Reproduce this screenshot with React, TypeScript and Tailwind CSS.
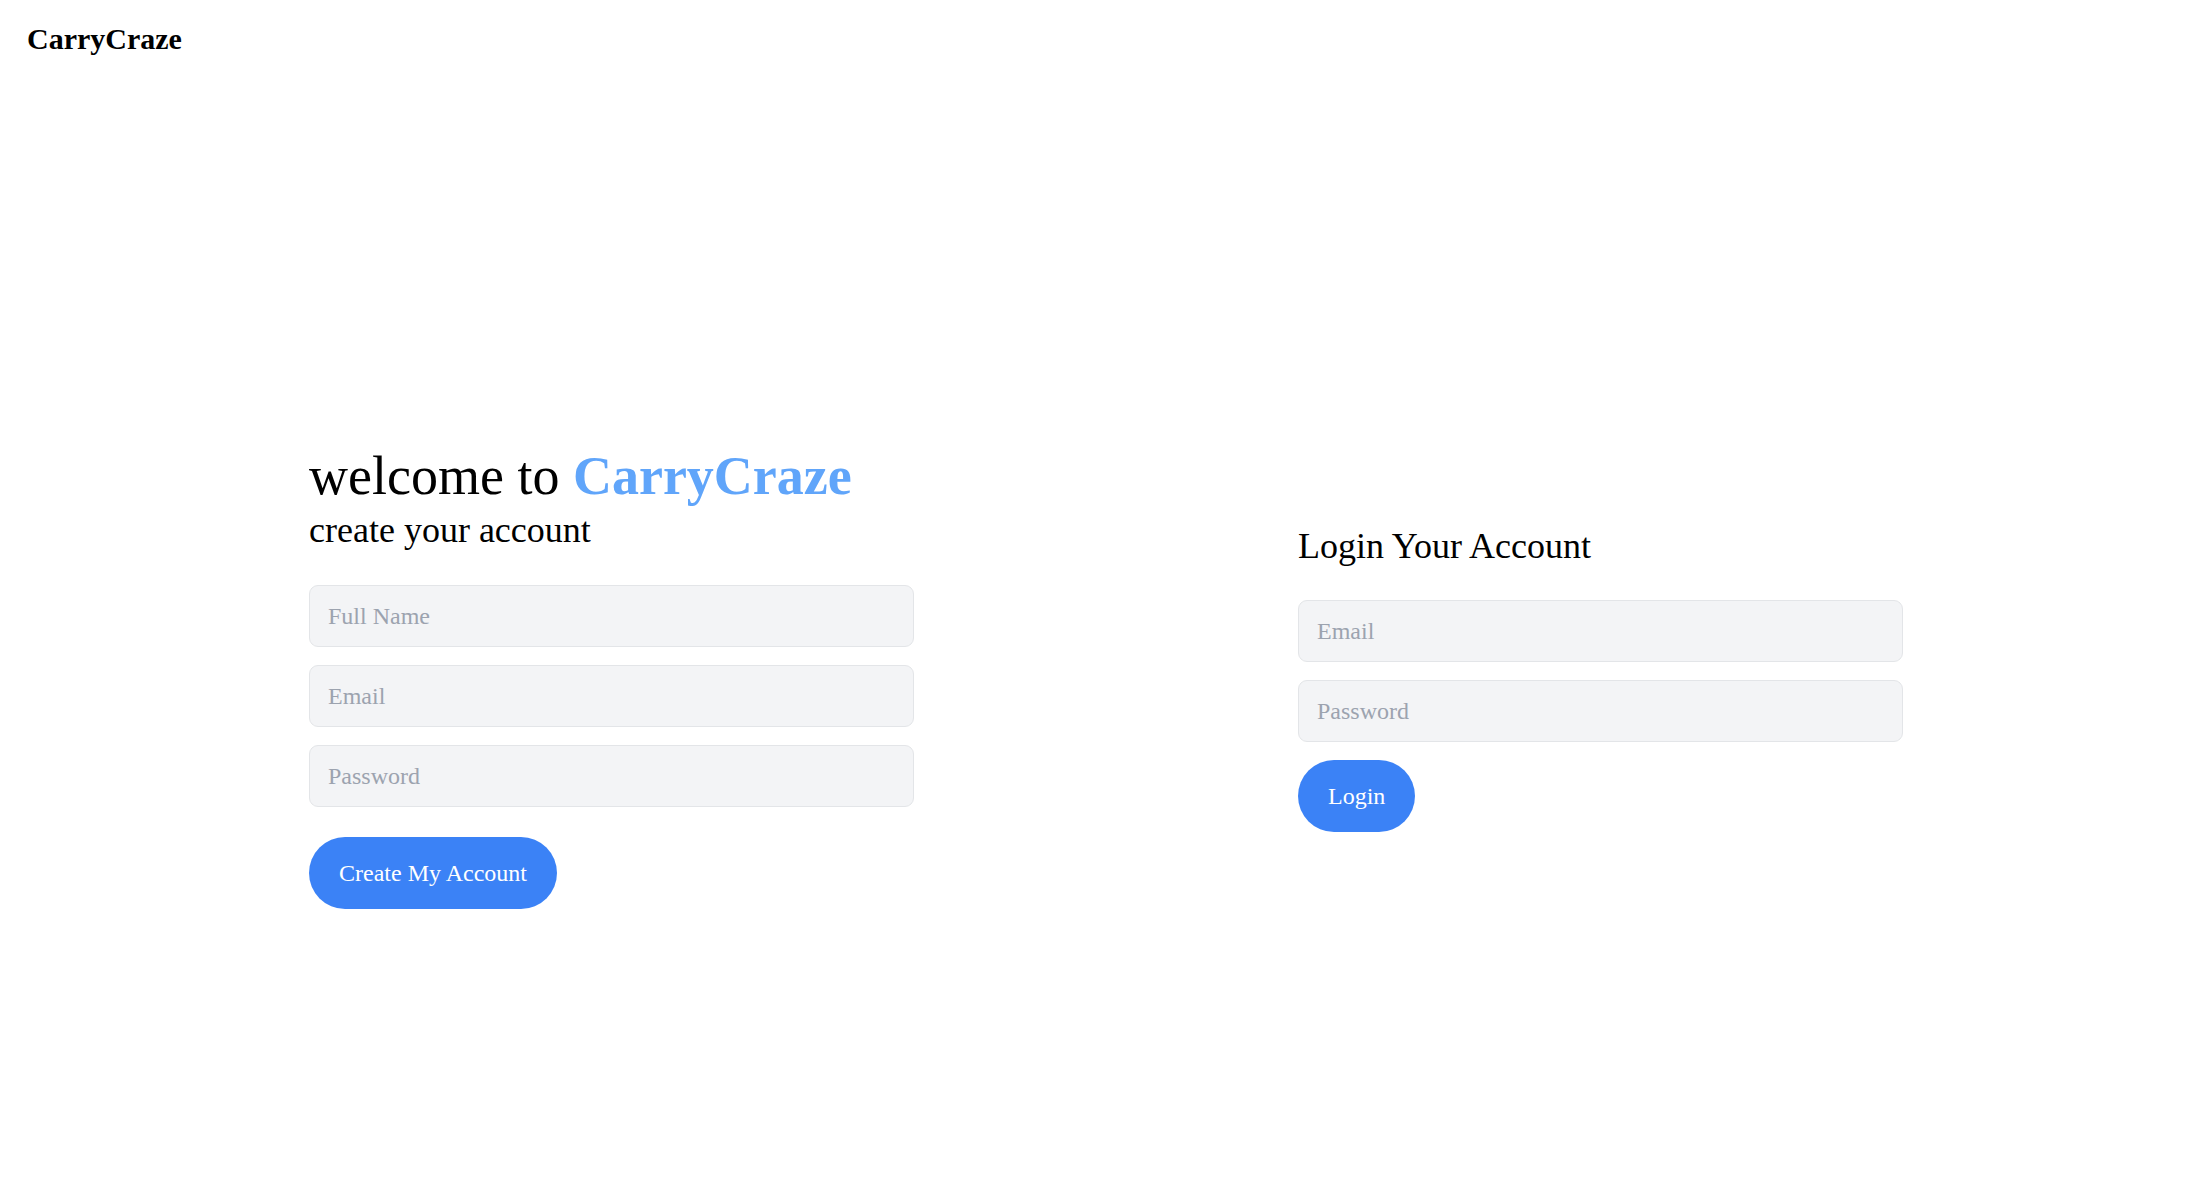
import React from "react";

const serif = { fontFamily: '"Liberation Serif", "Times New Roman", serif' };

function Field({ placeholder, type = "text" }: { placeholder: string; type?: string }) {
  return (
    <input
      type={type}
      placeholder={placeholder}
      className="block w-full h-[62px] rounded-[9px] border border-[#e3e5e8] bg-[#f3f4f6] pl-[18px] pr-[17px] text-[24px] leading-[36px] text-black placeholder:text-[#9ca3af] outline-none font-['Liberation_Serif',serif]"
    />
  );
}

export default function App() {
  return (
    <div className="w-full h-[1194px] bg-white text-black flex flex-col overflow-hidden font-['Liberation_Serif','Times_New_Roman',serif]" style={serif}>
      <header className="h-[80px] shrink-0 flex items-center px-[27px] pb-[2px]">
        <span className="text-[30px] leading-[36px] font-bold">CarryCraze</span>
      </header>
      <main className="flex-1 flex items-center justify-between px-[309px] pt-[80px]">
        <section className="w-[605px] flex flex-col">
          <h1 className="text-[54px] leading-[60px] font-normal pt-[1px]">
            welcome to <span className="font-bold text-[#60a5fa]">CarryCraze</span>
          </h1>
          <p className="text-[36px] leading-[48px]">create your account</p>
          <div className="mt-[31px] flex flex-col gap-[18px]">
            <Field placeholder="Full Name" />
            <Field placeholder="Email" type="email" />
            <Field placeholder="Password" type="password" />
          </div>
          <div className="mt-[30px]">
            <button className="h-[72px] rounded-full bg-[#3b82f6] px-[30px] text-[24px] leading-[36px] text-white font-['Liberation_Serif',serif]">
              Create My Account
            </button>
          </div>
        </section>
        <section className="w-[605px] flex flex-col">
          <h2 className="text-[36px] leading-[48px] font-normal">Login Your Account</h2>
          <div className="mt-[30px] flex flex-col gap-[18px]">
            <Field placeholder="Email" type="email" />
            <Field placeholder="Password" type="password" />
          </div>
          <div className="mt-[18px]">
            <button className="h-[72px] rounded-full bg-[#3b82f6] px-[30px] text-[24px] leading-[36px] text-white font-['Liberation_Serif',serif]">
              Login
            </button>
          </div>
        </section>
      </main>
    </div>
  );
}
